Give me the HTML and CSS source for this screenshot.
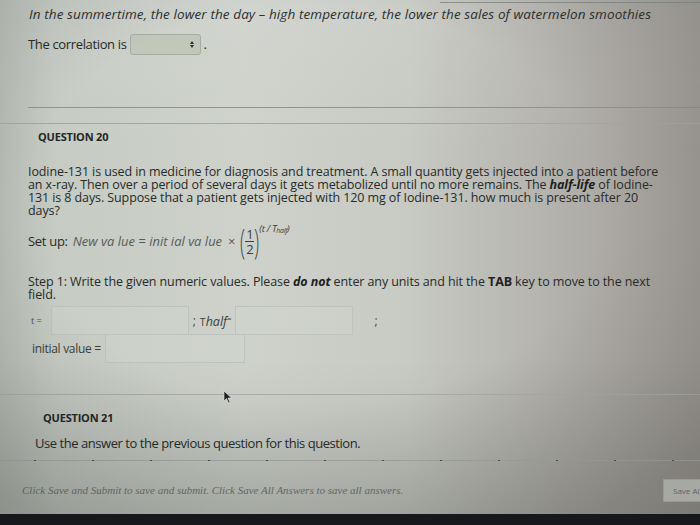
FILE: index.html
```html
<!DOCTYPE html>
<html>
<head>
<meta charset="utf-8">
<link rel="stylesheet" href="styles.css">
</head>
<body>
<div class="screen">
  <div class="toprule"></div>
  <p class="prev-q">In the summertime, the lower the day – high temperature, the lower the sales of watermelon smoothies</p>
  <div class="corr">
    <span>The correlation is</span>
    <span class="select"><span class="arrows"><span class="up"></span><span class="down"></span></span></span>
    <span>.</span>
  </div>
  <div class="rule rule-a"></div>
  <div class="rule rule-b"></div>

  <h3 class="qtitle q20">QUESTION 20</h3>
  <p class="para">Iodine-131 is used in medicine for diagnosis and treatment. A small quantity gets injected into a patient before an x-ray. Then over a period of several days it gets metabolized until no more remains. The <b><i>half-life</i></b> of Iodine-131 is 8 days. Suppose that a patient gets injected with 120 mg of Iodine-131. how much is present after 20 days?</p>

  <div class="setup">
    <span class="lbl">Set up:</span>
    <span class="formula">New va lue = init ial va lue</span>
    <span class="times">×</span>
    <span class="paren">(</span>
    <span class="frac"><span class="num">1</span><span class="den">2</span></span>
    <span class="paren">)</span>
    <span class="sup">(t / T<sub>half</sub>)</span>
  </div>

  <p class="para step">Step 1: Write the given numeric values. Please <b><i>do not</i></b> enter any units and hit the <b>TAB</b> key to move to the next field.</p>

  <div class="row row-t">
    <span class="small">t =</span>
    <span class="box box-t"></span>
    <span class="semi">;</span>
    <span class="thalf">T<i>half</i><sup>=</sup></span>
    <span class="box box-h"></span>
    <span class="semi">;</span>
  </div>
  <div class="row row-i">
    <span class="ilbl">initial value =</span>
    <span class="box box-i"></span>
  </div>

  <div class="rule rule-c"></div>
  <svg class="cursor" width="10" height="14" viewBox="0 0 10 14"><path d="M1 1 L1 11 L3.5 8.5 L5.5 13 L7 12.3 L5 8 L8.5 8 Z" fill="#1f2220" stroke="#e8e8e8" stroke-width="0.6"/></svg>

  <h3 class="qtitle q21">QUESTION 21</h3>
  <p class="use">Use the answer to the previous question for this question.</p>
  <div class="dots"></div>

  <div class="footer">
    <span class="hint">Click Save and Submit to save and submit. Click Save All Answers to save all answers.</span>
    <span class="savebtn">Save Al</span>
  </div>
  <div class="vignette"></div>
</div>
<div class="bezel"></div>
</body>
</html>
```
FILE: styles.css
```css
html, body {
  margin: 0;
  padding: 0;
  background: #15171b;
}
.screen {
  position: relative;
  width: 700px;
  height: 514px;
  overflow: hidden;
  font-family: "Open Sans", "DejaVu Sans", sans-serif;
  color: #262a28;
  background:
    linear-gradient(to bottom, rgba(255,255,255,0.08) 0%, rgba(255,255,255,0) 30%, rgba(0,0,0,0) 70%, rgba(40,45,40,0.14) 100%),
    linear-gradient(to right, #b6bbb4 0%, #c6cbc4 8%, #ced2cb 35%, #c8cac4 58%, #b3b1ac 80%, #9f9b95 100%);
}
.vignette {
  position: absolute;
  inset: 0;
  pointer-events: none;
  background: radial-gradient(ellipse 75% 70% at 45% 40%, rgba(0,0,0,0) 55%, rgba(30,32,30,0.16) 100%);
}
.toprule {
  position: absolute;
  left: 440px;
  top: 2px;
  width: 270px;
  height: 1px;
  background: #8c918c;
}
.prev-q {
  margin: 0;
  padding: 6px 0 0 29px;
  font-size: 13.5px;
  font-style: italic;
  letter-spacing: 0.1px;
  line-height: 16px;
  color: #2c302e;
  white-space: nowrap;
}
.corr {
  display: flex;
  align-items: center;
  gap: 3px;
  margin: 11px 0 0 28px;
  font-size: 13px;
  letter-spacing: -0.35px;
  height: 22px;
}
.select {
  width: 71px;
  height: 21px;
  border: 1px solid #a7ada3;
  border-radius: 3px;
  background: #c1c8ba;
  display: flex;
  justify-content: flex-end;
  align-items: center;
  padding-right: 6px;
  box-sizing: border-box;
}
.arrows {
  display: flex;
  flex-direction: column;
  gap: 1px;
}
.up, .down {
  width: 0; height: 0;
  border-left: 2.5px solid transparent;
  border-right: 2.5px solid transparent;
}
.up { border-bottom: 3.5px solid #2d302e; }
.down { border-top: 3.5px solid #2d302e; }

.rule { height: 1px; background: #8f948f; }
.rule-a { margin: 52px 0 0 28px; }
.rule-b { margin: 15px 0 0 0; background: #a4a8a3; }

.qtitle {
  margin: 0;
  font-size: 11px;
  font-weight: 700;
  letter-spacing: -0.2px;
  color: #232624;
}
.q20 { margin: 5px 0 0 38px; line-height: 16px; }
.para {
  margin: 0;
  padding: 0 38px 0 28px;
  font-size: 12.5px;
  line-height: 13px;
  letter-spacing: -0.1px;
  color: #272b29;
}
.q20 + .para { margin-top: 20px; }
.para b { color: #1e211f; }

.setup {
  display: flex;
  align-items: center;
  margin: 6px 0 0 28px;
  height: 36px;
  font-size: 13px;
  letter-spacing: -0.3px;
}
.lbl { margin-right: 5px; }
.formula { font-style: italic; color: #585c5a; letter-spacing: 0; }
.times { margin: 0 5px 0 6px; color: #555; font-size: 13px; }
.paren { font-size: 34px; font-weight: 300; color: #4a4d4b; line-height: 1; transform: scaleX(0.55); margin: 0 -2px; }
.frac {
  display: flex;
  flex-direction: column;
  align-items: center;
  font-size: 13px;
  line-height: 14px;
  color: #3a3d3b;
}
.num { border-bottom: 1px solid #3a3d3b; padding: 0 1px; }
.sup {
  align-self: flex-start;
  font-size: 9.5px;
  font-style: italic;
  color: #3a3d3b;
  margin-left: 0;
  margin-top: -1px;
}
.sup sub { font-size: 7px; vertical-align: -1px; }

.step { margin-top: 16px; }

.row { display: flex; align-items: center; }
.row-t { margin: 4px 0 0 31px; height: 31px; }
.small { font-size: 9px; color: #4a4e4b; margin-right: 9px; }
.box {
  height: 29px;
  box-sizing: border-box;
  border: 1px solid #bfc3bd;
  background: rgba(210,214,207,0.35);
}
.box-t { width: 138px; }
.box-h { width: 118px; margin-left: 3px; }
.semi { font-size: 12px; color: #4a4e4b; margin: 0 4px; }
.row-t .semi:last-child { margin-left: 22px; }
.thalf { font-size: 10.5px; color: #3b3f3c; }
.thalf i { font-size: 12.5px; }
.thalf sup { font-size: 8px; }
.row-i { margin: -3px 0 0 32px; height: 30px; }
.ilbl { font-size: 12px; letter-spacing: -0.3px; color: #3a3e3b; margin-right: 4px; }
.box-i { width: 140px; }

.rule-c { margin: 31px 0 0 0; background: #a9aca6; }
.cursor { position: absolute; left: 223px; top: 390px; }

.q21 { margin: 15px 0 0 43px; line-height: 16px; }
.use {
  margin: 9px 0 0 35px;
  font-size: 13px;
  letter-spacing: -0.45px;
  line-height: 17px;
  color: #262a28;
}
.dots {
  margin: 8px 0 0 0;
  height: 1px;
  width: 700px;
  background:
    repeating-linear-gradient(to right, transparent 0 34px, #4d514d 34px 36px, transparent 36px 58px),
    #a3a7a2;
}
.footer {
  display: flex;
  justify-content: space-between;
  align-items: center;
  margin: 17px 0 0 22px;
  height: 24px;
}
.hint {
  font-family: "Liberation Serif", "DejaVu Serif", serif;
  font-style: italic;
  font-size: 11px;
  letter-spacing: 0;
  color: #6b6e6a;
}
.savebtn {
  width: 37px;
  height: 23px;
  box-sizing: border-box;
  padding-left: 9px;
  background: #c2c3be;
  border: 1px solid #b0b1ac;
  border-right: none;
  font-size: 8px;
  line-height: 21px;
  color: #6c6e6a;
  white-space: nowrap;
  overflow: hidden;
}
.bezel { height: 11px; background: #16181c; }
```
